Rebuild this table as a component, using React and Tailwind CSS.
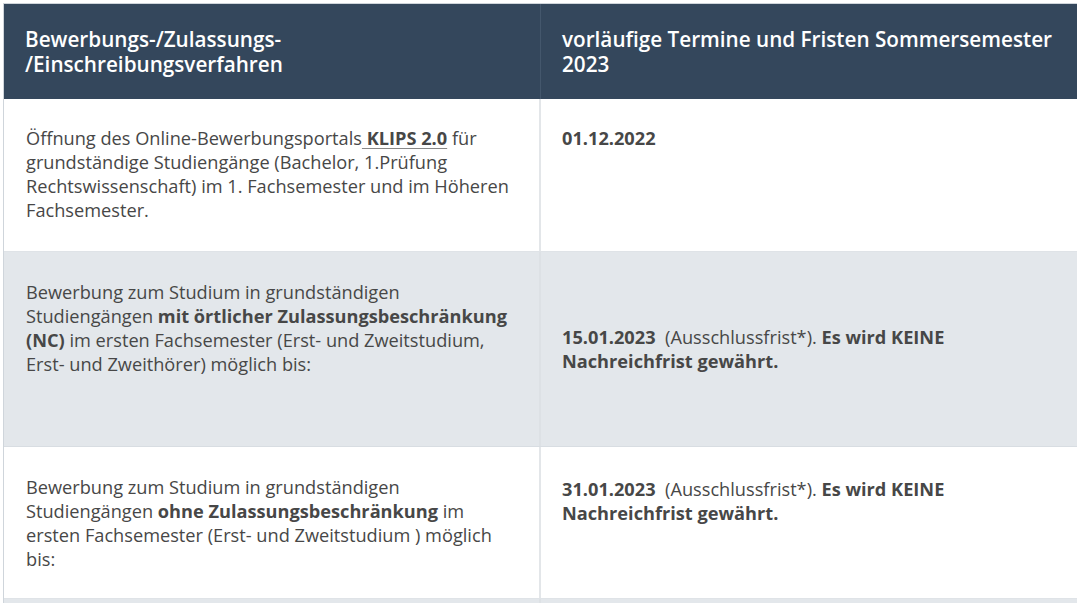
export default function App() {
  const font = { fontFamily: '"Open Sans", "Noto Sans", sans-serif' };
  return (
    <div className="w-[1080px] h-[603px] overflow-hidden bg-white pt-[3px] pl-[3px]" style={font}>
      <div className="w-[1074px] border-l border-t border-[#cfd5db]">
        {/* header */}
        <div className="grid grid-cols-[537px_537px] bg-[#34475c] text-white font-semibold text-[20.7px] leading-[25px] whitespace-nowrap">
          <div className="pl-[21px] pt-[23px] h-[95px] border-r border-[#44576c]">
            Bewerbungs-/Zulassungs-<br />/Einschreibungsverfahren
          </div>
          <div className="pl-[21px] pt-[23px]">
            vorläufige Termine und Fristen Sommersemester<br />2023
          </div>
        </div>
        {/* row 1 */}
        <div className="grid grid-cols-[537px_537px] text-[18.2px] leading-[24px] text-[#474747] bg-white border-b border-[#dfe3e7] whitespace-nowrap">
          <div className="h-[152px] pl-[22px] pt-[27px] border-r-2 border-[#e3e6e9]">
            Öffnung des Online-Bewerbungsportals<a className="font-bold underline decoration-[#888] underline-offset-[3px]"> KLIPS 2.0</a> für<br />
            grundständige Studiengänge (Bachelor, 1.Prüfung<br />
            Rechtswissenschaft) im 1. Fachsemester und im Höheren<br />
            Fachsemester.
          </div>
          <div className="pl-[21px] pt-[27px] font-bold">01.12.2022</div>
        </div>
        {/* row 2 */}
        <div className="grid grid-cols-[537px_537px] text-[18.2px] leading-[24px] text-[#474747] bg-[#e3e7eb] border-b border-[#d8dde2] whitespace-nowrap">
          <div className="h-[194px] pl-[22px] pt-[28px] border-r-2 border-[#dde1e5]">
            Bewerbung zum Studium in grundständigen<br />
            Studiengängen <b>mit örtlicher Zulassungsbeschränkung</b><br />
            <b>(NC)</b> im ersten Fachsemester (Erst- und Zweitstudium,<br />
            Erst- und Zweithörer) möglich bis:
          </div>
          <div className="flex items-center pl-[21px]">
            <div>
              <b>15.01.2023</b>&nbsp; (Ausschlussfrist*). <b>Es wird KEINE<br />Nachreichfrist gewährt.</b>
            </div>
          </div>
        </div>
        {/* row 3 */}
        <div className="grid grid-cols-[537px_537px] text-[18.2px] leading-[24px] text-[#474747] bg-white border-b border-[#dfe3e7] whitespace-nowrap">
          <div className="h-[151px] pl-[22px] pt-[28px] border-r-2 border-[#e3e6e9]">
            Bewerbung zum Studium in grundständigen<br />
            Studiengängen <b>ohne Zulassungsbeschränkung</b> im<br />
            ersten Fachsemester (Erst- und Zweitstudium ) möglich<br />
            bis:
          </div>
          <div className="pl-[21px] pt-[30px]">
            <b>31.01.2023</b>&nbsp; (Ausschlussfrist*). <b>Es wird KEINE<br />Nachreichfrist gewährt.</b>
          </div>
        </div>
        {/* row 4 (cut off) */}
        <div className="grid grid-cols-[537px_537px] bg-[#e3e7eb]">
          <div className="h-[40px] border-r-2 border-[#dde1e5]"></div>
          <div></div>
        </div>
      </div>
    </div>
  );
}
